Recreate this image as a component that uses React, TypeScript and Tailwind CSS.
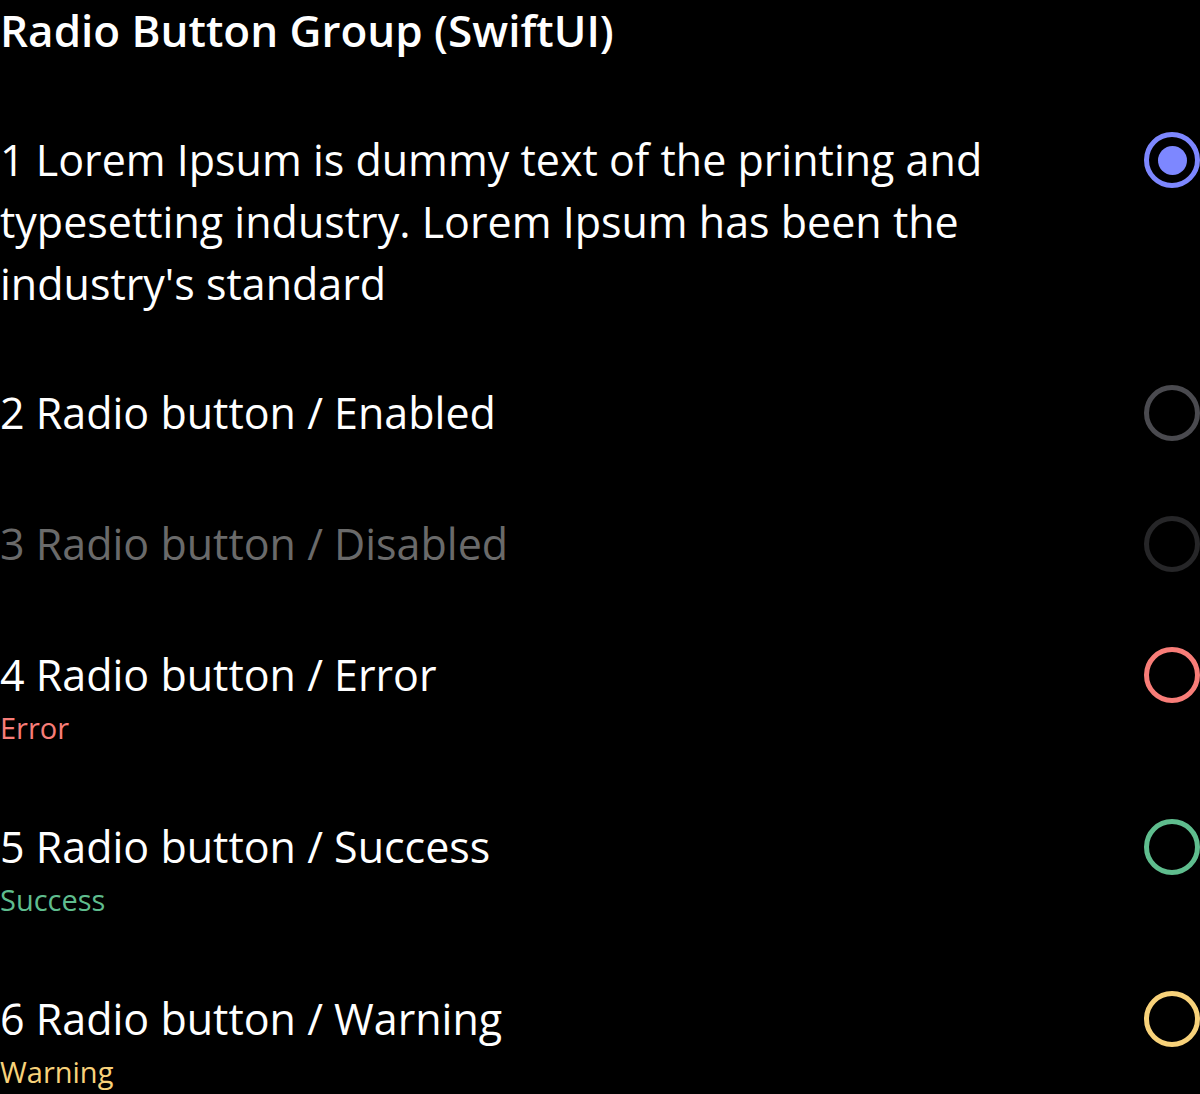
const font = { fontFamily: "'Open Sans', 'Noto Sans', sans-serif" };

type Tone = "selected" | "enabled" | "disabled" | "error" | "success" | "warning";

const ringColors: Record<Tone, string> = {
  selected: "border-[#7d87ff]",
  enabled: "border-[#4a4a4f]",
  disabled: "border-[#262628]",
  error: "border-[#f87d78]",
  success: "border-[#5fbd8e]",
  warning: "border-[#f8d27a]",
};

const hintColors: Partial<Record<Tone, string>> = {
  error: "text-[#f87d78]",
  success: "text-[#5fbd8e]",
  warning: "text-[#f8d27a]",
};

function Radio({ tone }: { tone: Tone }) {
  return (
    <div
      className={`mt-[3px] flex h-14 w-14 shrink-0 items-center justify-center rounded-full border-[5px] ${ringColors[tone]}`}
    >
      {tone === "selected" && <div className="h-[29px] w-[29px] rounded-full bg-[#7d87ff]" />}
    </div>
  );
}

function Row({
  label,
  tone,
  hint,
  className = "",
}: {
  label: string;
  tone: Tone;
  hint?: string;
  className?: string;
}) {
  const textColor = tone === "disabled" ? "text-[#6a6a6a]" : "text-white";
  return (
    <div className={`flex items-start justify-between gap-8 ${className}`}>
      <div className="max-w-[1000px]">
        <p className={`text-[43px] leading-[62px] ${textColor}`}>{label}</p>
        {hint && <p className={`pt-[2px] text-[29px] leading-[39px] ${hintColors[tone]}`}>{hint}</p>}
      </div>
      <Radio tone={tone} />
    </div>
  );
}

export default function App() {
  return (
    <div className="min-h-[1094px] w-[1200px] bg-black" style={font}>
      <h1 className="pt-[4px] text-[44px] font-semibold leading-[52px] text-white">
        Radio Button Group (SwiftUI)
      </h1>
      <div className="mt-[73px] flex flex-col gap-[69px]">
        <Row
          tone="selected"
          className="-mb-[2px]"
          label="1 Lorem Ipsum is dummy text of the printing and typesetting industry. Lorem Ipsum has been the industry's standard"
        />
        <Row tone="enabled" label="2 Radio button / Enabled" />
        <Row tone="disabled" label="3 Radio button / Disabled" />
        <Row tone="error" label="4 Radio button / Error" hint="Error" />
        <Row tone="success" label="5 Radio button / Success" hint="Success" />
        <Row tone="warning" label="6 Radio button / Warning" hint="Warning" />
      </div>
    </div>
  );
}
